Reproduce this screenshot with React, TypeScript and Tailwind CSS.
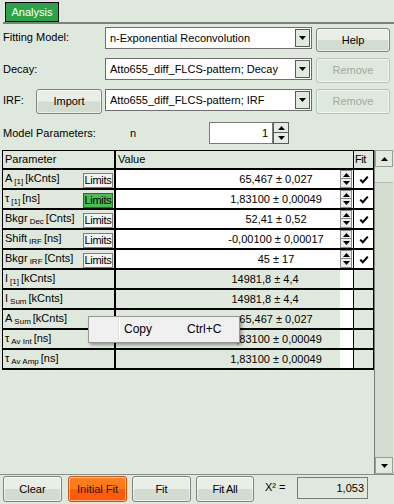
import React from "react";

const Up = () => (
  <svg width="7" height="4" viewBox="0 0 7 4">
    <path d="M0 4 L3.5 0 L7 4Z" fill="#000" />
  </svg>
);
const Down = () => (
  <svg width="7" height="4" viewBox="0 0 7 4">
    <path d="M0 0 L3.5 4 L7 0Z" fill="#000" />
  </svg>
);
const Check = () => (
  <svg width="10" height="9" viewBox="0 0 10 9">
    <path d="M1.2 4.6 L3.8 7.2 L8.8 1.6" stroke="#000" strokeWidth="2" fill="none" />
  </svg>
);

function Btn({
  children,
  className = "",
  disabled = false,
  orange = false,
}: {
  children: React.ReactNode;
  className?: string;
  disabled?: boolean;
  orange?: boolean;
}) {
  let skin =
    "border-[#7e877c] text-black bg-[linear-gradient(to_bottom,#e9efe6_0%,#e9efe6_48%,#d3dcd0_52%,#d3dcd0_100%)]";
  if (disabled) skin = "border-[#b9c2b7] text-[#a2aaa0] bg-[#dfe8dc]";
  if (orange)
    skin =
      "border-[#c9580f] text-[#1a1a1a] bg-[linear-gradient(to_bottom,#ff7f1e_0%,#ff781a_48%,#ff5c0c_52%,#ff5a0a_100%)]";
  return (
    <div
      className={`flex items-center justify-center rounded-[3px] border shadow-[inset_0_0_0_1px_rgba(255,255,255,0.55)] ${skin} ${className}`}
    >
      {children}
    </div>
  );
}

function Combo({ text }: { text: string }) {
  return (
    <div className="h-[22px] w-[207px] bg-white border border-[#6e6e6e] flex items-center">
      <span className="flex-1 pl-[4px] whitespace-nowrap overflow-hidden">{text}</span>
      <div className="w-[15px] h-[18px] mr-[1px] border border-[#5a5a5a] bg-[#e2e9df] flex items-center justify-center">
        <Down />
      </div>
    </div>
  );
}

const Sub = ({ children }: { children: React.ReactNode }) => (
  <span className="text-[8px] relative top-[2px] mx-[2px]">{children}</span>
);

function Limits({ green }: { green?: boolean }) {
  return (
    <div
      className={`mt-[3px] self-start mr-[1px] w-[30px] h-[15px] flex items-center justify-center border text-[11px] tracking-[-0.3px] ${
        green ? "bg-[#4cbd55] border-[#2d6a30]" : "bg-[#f4f4f4] border-[#7d7d7d]"
      }`}
    >
      Limits
    </div>
  );
}

function Spinner() {
  return (
    <div className="w-[12px] mr-[1px] flex flex-col">
      <div className="h-[9px] border border-[#8a8a8a] bg-[#ececec] flex items-center justify-center">
        <Up />
      </div>
      <div className="h-[9px] border border-t-0 border-[#8a8a8a] bg-[#ececec] flex items-center justify-center">
        <Down />
      </div>
    </div>
  );
}

type RowData = {
  name: React.ReactNode;
  value: string;
  input: boolean;
  green?: boolean;
  padR?: string;
};

function Row({ name, value, input, green, padR = "" }: RowData) {
  return (
    <div className="flex h-[20px] border-b-2 border-black">
      <div className="w-[113px] border-r-2 border-black flex items-center justify-between">
        <span className="pl-[2px] whitespace-nowrap">{name}</span>
        {input && <Limits green={green} />}
      </div>
      <div className={`w-[238px] border-r border-black flex ${input ? "bg-white" : ""}`}>
        <div className={`flex-1 flex items-center justify-center pl-[96px] whitespace-nowrap ${padR}`}>
          {value}
        </div>
        {input ? <Spinner /> : <div className="w-[13px] bg-white" />}
      </div>
      <div className={`w-[19px] flex items-center justify-center ${input ? "bg-white" : ""}`}>
        {input && <Check />}
      </div>
    </div>
  );
}

const rows: RowData[] = [
  { name: <>A<Sub>[1]</Sub>[kCnts]</>, value: "65,467 ± 0,027", input: true },
  { name: <>τ<Sub>[1]</Sub>[ns]</>, value: "1,83100 ± 0,00049", input: true, green: true },
  { name: <>Bkgr<Sub>Dec</Sub>[Cnts]</>, value: "52,41 ± 0,52", input: true },
  { name: <>Shift<Sub>IRF</Sub>[ns]</>, value: "-0,00100 ± 0,00017", input: true },
  { name: <>Bkgr<Sub>IRF</Sub>[Cnts]</>, value: "45 ± 17", input: true },
  { name: <>I<Sub>[1]</Sub>[kCnts]</>, value: "14981,8 ± 4,4", input: false, padR: "pr-[22px]" },
  { name: <>I<Sub>Sum</Sub>[kCnts]</>, value: "14981,8 ± 4,4", input: false, padR: "pr-[22px]" },
  { name: <>A<Sub>Sum</Sub>[kCnts]</>, value: "65,467 ± 0,027", input: false },
  { name: <>τ<Sub>Av Int</Sub>[ns]</>, value: "1,83100 ± 0,00049", input: false },
  { name: <>τ<Sub>Av Amp</Sub>[ns]</>, value: "1,83100 ± 0,00049", input: false },
];

export default function App() {
  return (
    <div className="w-[394px] h-[504px] bg-[#dfe8dc] relative overflow-hidden text-[11px] leading-[13px] text-black font-['Liberation_Sans',Arial,sans-serif]">
      {/* Tab */}
      <div className="h-[22px] pl-[5px] pt-[2px]">
        <div className="w-[54px] h-[20px] bg-[#2aa44a] border border-black text-white flex items-center justify-center">
          Analysis
        </div>
      </div>
      <div className="ml-[3px] h-[2px] bg-[#7f7f7f]" />

      {/* Fitting model */}
      <div className="flex items-start mt-[3px] h-[25px]">
        <div className="w-[105px] h-[21px] flex items-center pl-[3px]">Fitting Model:</div>
        <Combo text="n-Exponential Reconvolution" />
        <Btn className="ml-[4px] mt-[1px] w-[74px] h-[24px]">Help</Btn>
      </div>

      {/* Decay */}
      <div className="flex items-start mt-[6px] h-[25px]">
        <div className="w-[105px] h-[22px] flex items-center pl-[3px]">Decay:</div>
        <Combo text="Atto655_diff_FLCS-pattern; Decay" />
        <Btn disabled className="ml-[4px] w-[74px] h-[25px]">Remove</Btn>
      </div>

      {/* IRF */}
      <div className="flex items-start mt-[6px] h-[25px]">
        <div className="w-[36px] h-[22px] flex items-center pl-[3px]">IRF:</div>
        <Btn className="w-[66px] h-[25px]">Import</Btn>
        <div className="ml-[3px]">
          <Combo text="Atto655_diff_FLCS-pattern; IRF" />
        </div>
        <Btn disabled className="ml-[4px] w-[74px] h-[25px]">Remove</Btn>
      </div>

      {/* Model parameters */}
      <div className="flex items-center mt-[8px] h-[22px]">
        <div className="w-[130px] pl-[3px]">Model Parameters:</div>
        <div className="w-[79px]">n</div>
        <div className="w-[64px] h-[22px] bg-white border border-[#7a7a7a] flex items-center justify-end pr-[4px]">
          1
        </div>
        <div className="w-[16px] h-[22px] flex flex-col">
          <div className="h-[11px] border border-[#5a5a5a] bg-[#e6ece3] flex items-center justify-center">
            <Up />
          </div>
          <div className="h-[11px] border border-t-0 border-[#5a5a5a] bg-[#e6ece3] flex items-center justify-center">
            <Down />
          </div>
        </div>
      </div>

      {/* Table */}
      <div className="flex mt-[6px] h-[324px] pl-[2px]">
        <div className="w-[372px]">
          <div className="border-l border-t border-r border-black">
            <div className="flex h-[19px] border-b-2 border-black">
              <div className="w-[113px] border-r-2 border-black flex items-center pl-[2px]">Parameter</div>
              <div className="w-[238px] border-r border-black flex items-center pl-[2px]">Value</div>
              <div className="w-[19px] flex items-center pl-[1px] tracking-[-0.5px]">Fit</div>
            </div>
            {rows.map((r, i) => (
              <Row key={i} {...r} />
            ))}
          </div>
        </div>
        {/* Scrollbar */}
        <div className="w-[19px] h-full border-l border-[#7a7a7a] flex flex-col bg-[#d2dccf]">
          <div className="h-[17px] border border-[#98a196] bg-[#e2e9df] flex items-center justify-center">
            <Up />
          </div>
          <div className="h-[16px] bg-[#dfe8dc] border-b border-[#b4bdb2]" />
          <div className="flex-1" />
          <div className="h-[17px] border border-[#98a196] bg-[#e2e9df] flex items-center justify-center">
            <Down />
          </div>
        </div>
      </div>

      <div className="h-[1px] bg-[#8c8c8c]" />

      {/* Bottom buttons */}
      <div className="flex items-start mt-[1px] pl-[3px] h-[26px]">
        <Btn className="w-[59px] h-[26px]">Clear</Btn>
        <Btn orange className="ml-[6px] w-[59px] h-[26px]">Initial Fit</Btn>
        <Btn className="ml-[5px] w-[59px] h-[26px]">Fit</Btn>
        <Btn className="ml-[5px] w-[58px] h-[26px] tracking-[-0.3px]">Fit All</Btn>
        <div className="ml-[11px] w-[32px] h-[22px] flex items-center">X² =</div>
        <div className="mt-[1px] w-[71px] h-[22px] border border-[#7a7a7a] flex items-center justify-end pr-[3px]">
          1,053
        </div>
      </div>

      {/* Context menu */}
      <div className="absolute left-[88px] top-[316px] w-[152px] h-[27px] bg-[#f0f0f0] border border-[#979797] shadow-[2px_2px_3px_rgba(0,0,0,0.35)] flex items-center text-[12px]">
        <div className="w-[29px] h-full" />
        <div className="w-[1px] h-[23px] bg-[#e0e0e0]" />
        <div className="w-[1px] h-[23px] bg-white" />
        <span className="ml-[4px] w-[63px]">Copy</span>
        <span>Ctrl+C</span>
      </div>
    </div>
  );
}
